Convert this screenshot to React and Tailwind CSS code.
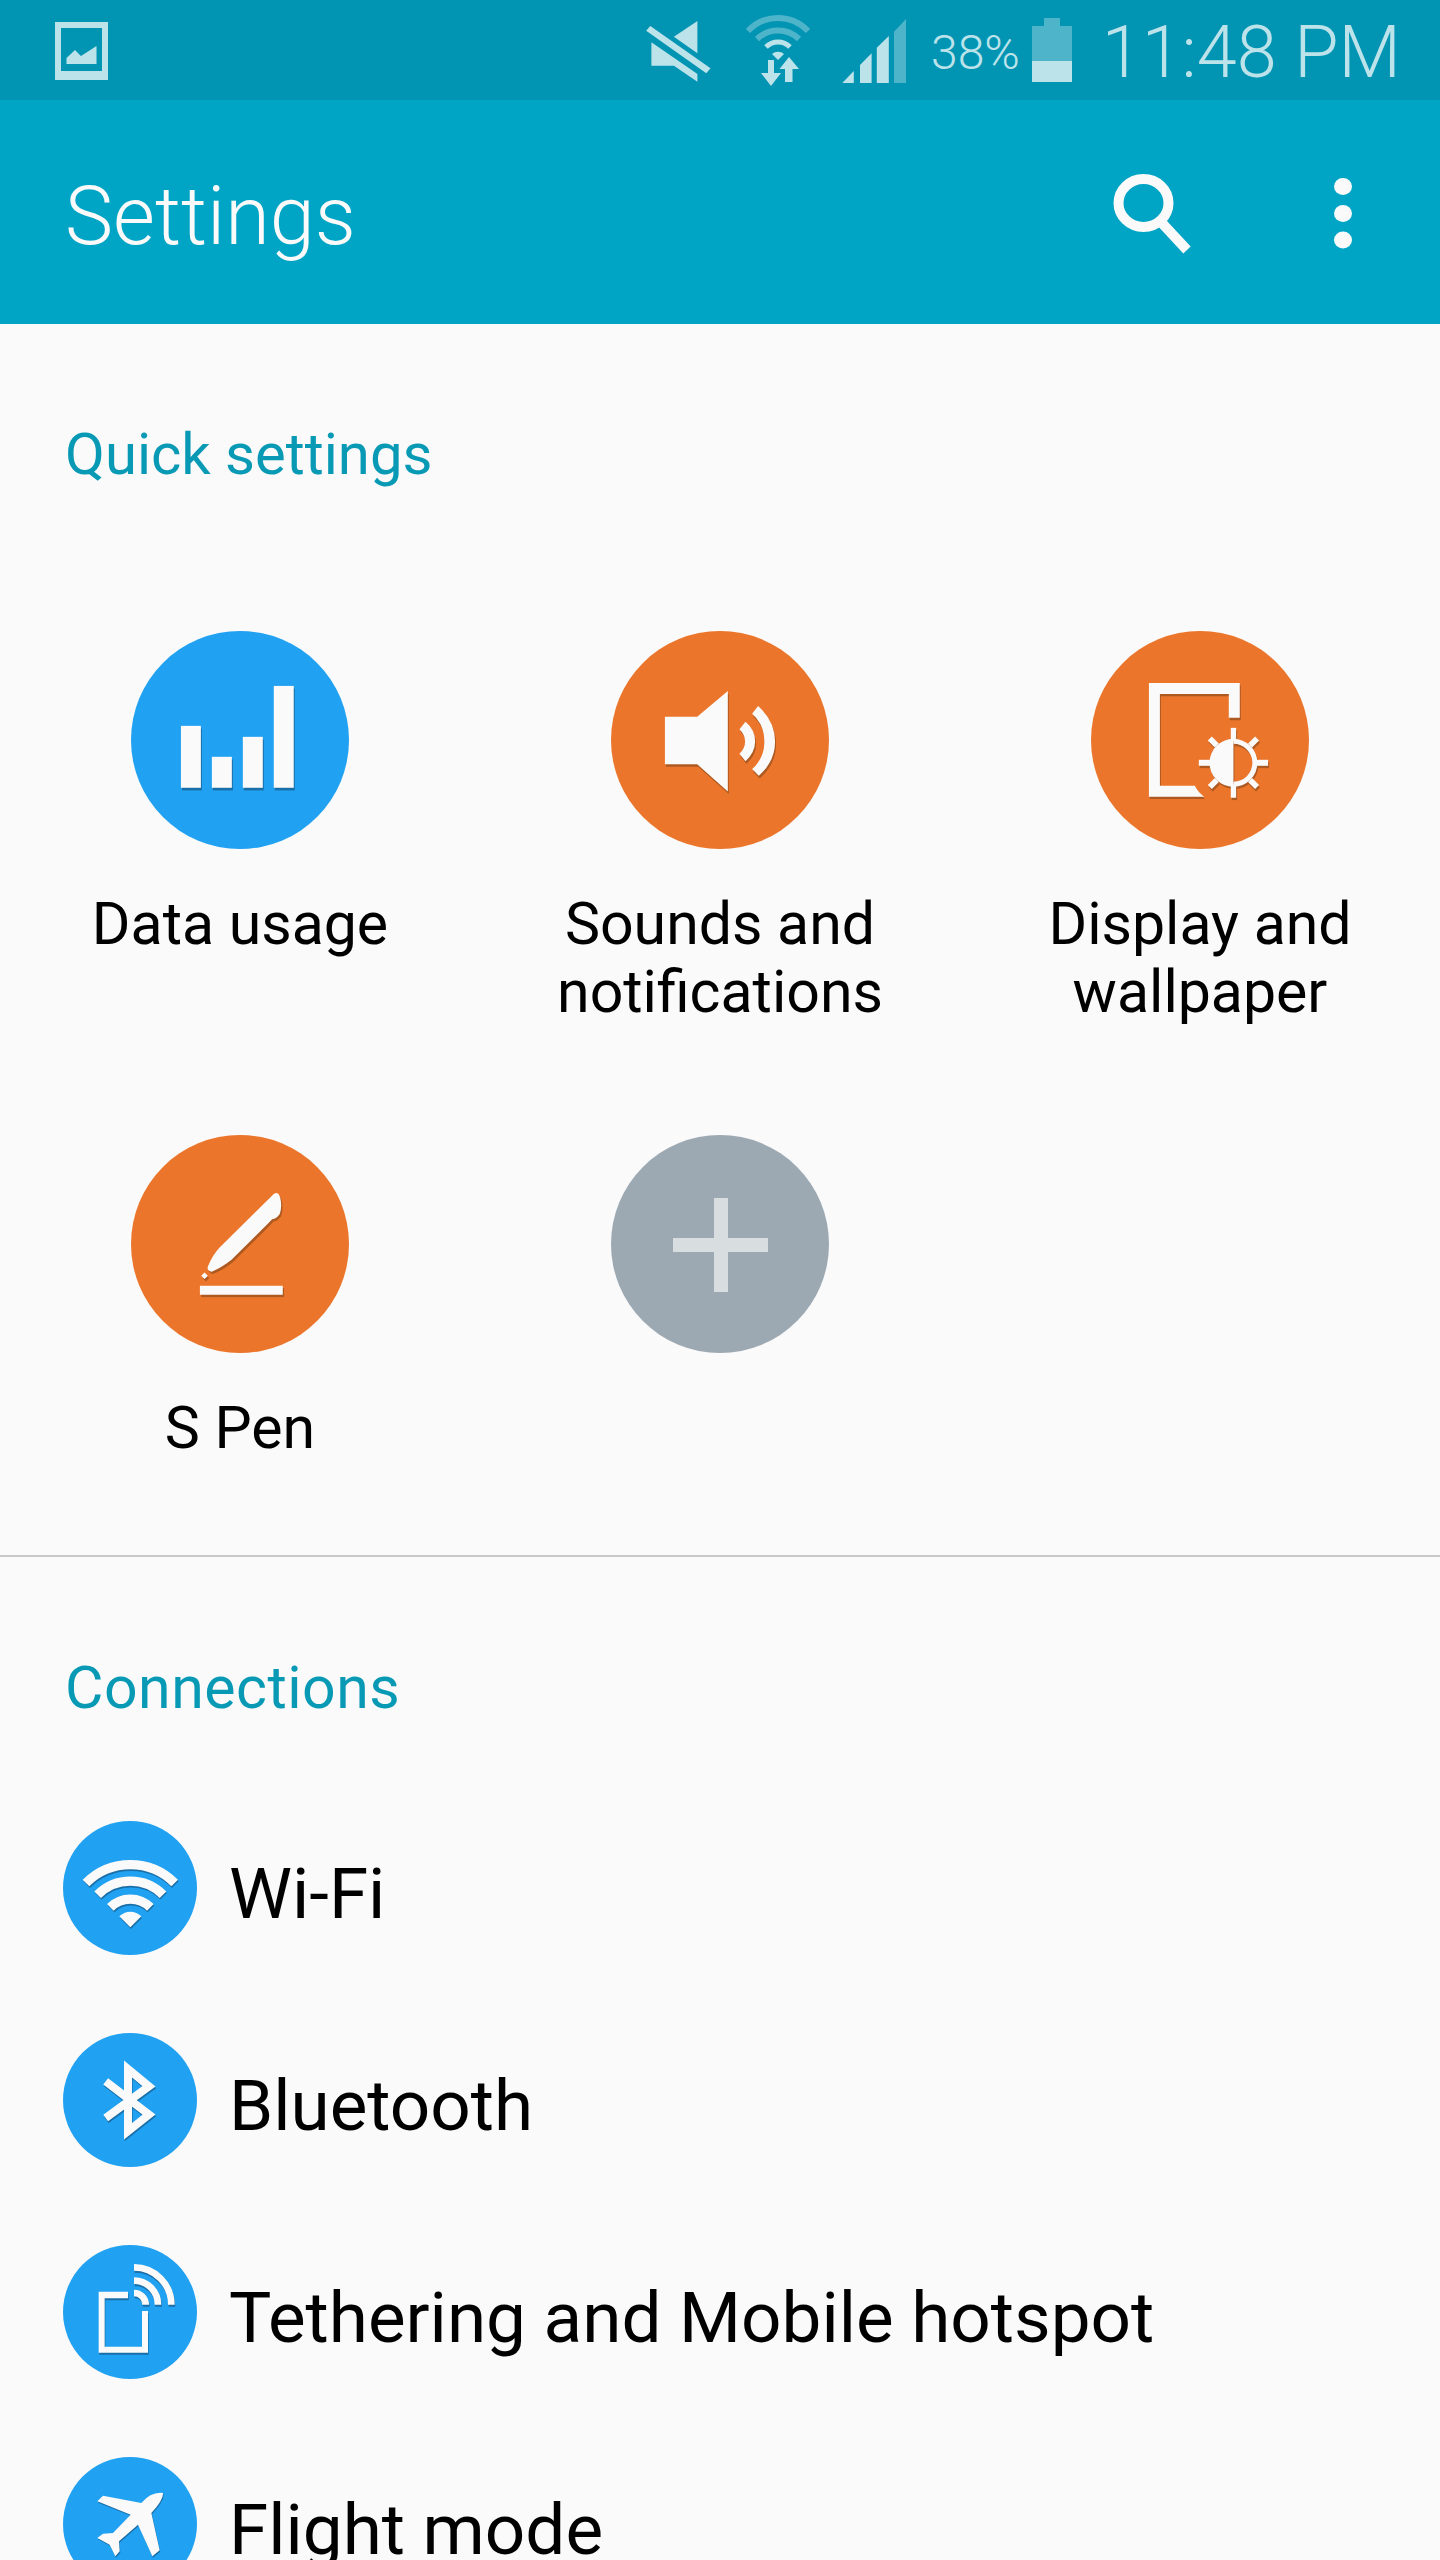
const WHITE = '#fafafa';
const BLUE_SHADOW = '#1a6fa8';
const ORANGE_SHADOW = '#ad5a22';

// draws the same shapes twice: a dark copy nudged down-right, then the white one
function Shadowed({ shadow, dx = 3, dy = 8, children }) {
  return (
    <>
      <g transform={`translate(${dx} ${dy})`} fill={shadow} stroke={shadow} strokeWidth="0" style={{ color: shadow }}>
        {children}
      </g>
      <g fill={WHITE} stroke={WHITE} strokeWidth="0" style={{ color: WHITE }}>
        {children}
      </g>
    </>
  );
}

function DataIcon() {
  return (
    <svg viewBox="63 63 655 655" className="w-full h-full">
      <Shadowed shadow={BLUE_SHADOW}>
        <rect x="213" y="348" width="60" height="186" />
        <rect x="306" y="441" width="60" height="93" />
        <rect x="399" y="381" width="60" height="153" />
        <rect x="492" y="228" width="60" height="306" />
      </Shadowed>
    </svg>
  );
}

function SoundIcon() {
  return (
    <svg viewBox="63 63 655 655" className="w-full h-full">
      <Shadowed shadow={ORANGE_SHADOW}>
        <path d="M225 321H322L414 243V545L322 463H225Z" />
        <path d="M505 288Q556 335 556 395Q556 455 507 498L487 478Q524 445 524 395Q524 345 487 312Z" />
        <path d="M467 336Q496 360 496 395Q496 428 467 454L449 432Q466 415 466 395Q466 375 449 358Z" />
      </Shadowed>
    </svg>
  );
}

function DisplayIcon() {
  return (
    <svg viewBox="63 63 655 655" className="w-full h-full">
      <Shadowed shadow={ORANGE_SHADOW} dy={7}>
        <path d="M237 219H510V324H477V252H270V528H375Q385 548 403 561H237Z" />
        <path d="M491 387A72 72 0 0 0 491 531Z" />
        <path d="M491 387A72 72 0 0 1 491 531V516A57 57 0 0 0 491 402Z" />
        <rect x="483" y="354" width="16" height="40" />
        <rect x="483" y="524" width="16" height="40" />
        <rect x="387" y="450" width="36" height="18" />
        <rect x="559" y="450" width="36" height="18" />
        <path d="M426 380L447 401L435 413L414 392Z" />
        <path d="M556 380L568 392L547 413L535 401Z" />
        <path d="M435 505L447 517L426 538L414 526Z" />
        <path d="M547 505L568 526L556 538L535 517Z" />
      </Shadowed>
    </svg>
  );
}

function PenIcon() {
  return (
    <svg viewBox="63 45 655 655" className="w-full h-full">
      <Shadowed shadow={ORANGE_SHADOW} dx={4} dy={7}>
        <path d="M492 222Q505 213 511 232Q518 258 510 282Q500 296 487 298L474 312L365 420Q335 444 305 456Q290 452 294 440Q308 405 330 382Z" />
        <path d="M284 458L294 468L284 478L274 468Z" />
        <rect x="270" y="498" width="249" height="27" />
      </Shadowed>
    </svg>
  );
}

function PlusIcon() {
  return (
    <svg viewBox="0 0 218 218" className="w-full h-full">
      <path d="M62 103H103V63H117V103H157V117H117V157H103V117H62Z" fill="#d8dde0" />
    </svg>
  );
}

function WifiIcon() {
  return (
    <svg viewBox="40 33 402 402" className="w-full h-full">
      <Shadowed shadow={BLUE_SHADOW} dx={2} dy={5}>
        <path d="M109 219A188 188 0 0 1 375 219" fill="none" stroke="currentColor" style={{ strokeWidth: 28 }} />
        <path d="M144 254A138 138 0 0 1 340 254" fill="none" stroke="currentColor" style={{ strokeWidth: 28 }} />
        <path d="M182 292A85 85 0 0 1 302 292" fill="none" stroke="currentColor" style={{ strokeWidth: 28 }} />
        <path d="M242 352L209 319A46 46 0 0 1 275 319Z" />
      </Shadowed>
    </svg>
  );
}

function BluetoothIcon() {
  return (
    <svg viewBox="40 670 402 402" className="w-full h-full">
      <Shadowed shadow={BLUE_SHADOW} dx={2} dy={5}>
        <path d="M168 815L298 915L235 965V778L298 830L168 925" fill="none" stroke="currentColor" style={{ strokeWidth: 24 }} />
      </Shadowed>
    </svg>
  );
}

function TetherIcon() {
  return (
    <svg viewBox="40 45 402 402" className="w-full h-full">
      <Shadowed shadow={BLUE_SHADOW} dx={2} dy={6}>
        <path d="M147 185H235V205H165V350H277V243H295V368H147Z" />
        <path d="M253 112A112 112 0 0 1 365 224" fill="none" stroke="currentColor" style={{ strokeWidth: 20 }} />
        <path d="M253 152A72 72 0 0 1 325 224" fill="none" stroke="currentColor" style={{ strokeWidth: 20 }} />
        <path d="M253 189A35 35 0 0 1 288 224" fill="none" stroke="currentColor" style={{ strokeWidth: 20 }} />
      </Shadowed>
    </svg>
  );
}

function PlaneIcon() {
  return (
    <svg viewBox="40 682 402 402" className="w-full h-full">
      <Shadowed shadow={BLUE_SHADOW} dx={2} dy={4}>
        <path d="M340 790Q342 810 305 850L330 962L308 980L265 885L208 935L210 965L197 980L180 945L143 925L160 912L190 910L243 855L143 815L160 798L275 820Q305 785 340 790Z" />
      </Shadowed>
    </svg>
  );
}

function QuickItem({ bg, icon, children }) {
  return (
    <div className="flex flex-col items-center">
      <div className={`w-[218px] h-[218px] rounded-full ${bg}`}>{icon}</div>
      <div className="mt-[41px] text-center text-[59px] leading-[68px] text-black">{children}</div>
    </div>
  );
}

function ConnectionRow({ icon, children }) {
  return (
    <div className="flex items-center h-[134px] mb-[78px]">
      <div className="w-[134px] h-[134px] rounded-full bg-[#21a1f1] shrink-0">{icon}</div>
      <div className="ml-[32px] pt-[10px] text-[71px] leading-none text-black whitespace-nowrap">{children}</div>
    </div>
  );
}

function StatusBar() {
  const light = '#bde3ea';
  const dim = '#4db4ca';
  return (
    <div className="h-[100px] bg-[#0295b3] flex items-center text-[#bde3ea]">
      <svg viewBox="55 0 53 100" className="w-[53px] h-[100px] ml-[55px]">
        <path d="M55 22H108V80H55ZM61 28V71H102V28Z" fill={light} fillRule="evenodd" />
        <path d="M66.5 64V58L75 50L81 56L96.5 46V64Z" fill={light} />
      </svg>
      <svg viewBox="646 0 65 100" className="w-[65px] h-[100px] ml-[538px]">
        <path d="M697.4 21L673.9 36.7L697.4 53.3Z" fill={light} />
        <path d="M650.3 26L710.5 68.3L706.3 73.3L646.2 30.7Z" fill={light} />
        <path d="M651.4 42.3V65.7H673.9L697.4 81.7V74Z" fill={light} />
      </svg>
      <svg viewBox="745 0 66 100" className="w-[66px] h-[100px] ml-[34px]">
        <path d="M748 31A41 41 0 0 1 808 31" fill="none" stroke={dim} strokeWidth="6" />
        <path d="M757 39A30 30 0 0 1 799 39" fill="none" stroke={dim} strokeWidth="6" />
        <path d="M766 47A17 17 0 0 1 790 47" fill="none" stroke={light} strokeWidth="5" />
        <path d="M778 60L772 54A9 9 0 0 1 784 54Z" fill={light} />
        <path d="M768 60H774V73H781L771 86L761 73H768Z" fill={light} />
        <path d="M785 82V69H779.5L789 57L799 69H792.5V82Z" fill={light} />
      </svg>
      <svg viewBox="842 0 64 100" className="w-[64px] h-[100px] ml-[31px]">
        <path d="M842.3 83L853.8 71V83Z" fill={light} />
        <path d="M860 83V65L871.6 53.3V83Z" fill={light} />
        <path d="M876.8 83V47.7L888.8 36V83Z" fill={light} />
        <path d="M894 83V31.7L906 19V83Z" fill={dim} />
      </svg>
      <span className="ml-[25px] pt-[6px] text-[48px] font-light leading-none">38%</span>
      <svg viewBox="1031 0 40 100" className="w-[40px] h-[100px] ml-[12px]">
        <path d="M1043 18H1059V26H1071V61H1031V26H1043Z" fill={dim} />
        <rect x="1031" y="61" width="40" height="21" fill={light} />
      </svg>
      <span className="ml-[30px] pt-[6px] text-[72px] font-light leading-none whitespace-nowrap">11:48 PM</span>
    </div>
  );
}

function AppBar() {
  return (
    <div className="h-[224px] bg-[#00a5c6] flex items-center pl-[65px]">
      <span className="pt-[8px] text-[81px] font-light leading-none text-[#fafafa]">Settings</span>
      <svg viewBox="1110 170 85 85" className="w-[85px] h-[85px] ml-auto">
        <ellipse cx="1143.5" cy="203" rx="25" ry="24" fill="none" stroke={WHITE} strokeWidth="10" />
        <path d="M1161 222L1187 250" stroke={WHITE} strokeWidth="10" />
      </svg>
      <svg viewBox="1330 170 26 80" className="w-[26px] h-[80px] ml-[135px] mr-[84px]">
        <ellipse cx="1343" cy="184.5" rx="9" ry="8.5" fill={WHITE} />
        <ellipse cx="1343" cy="211.5" rx="9" ry="8.5" fill={WHITE} />
        <ellipse cx="1343" cy="238" rx="9" ry="8.5" fill={WHITE} />
      </svg>
    </div>
  );
}

export default function App() {
  return (
    <div className="w-[1440px] h-[2560px] overflow-hidden bg-[#fafafa] font-['Roboto',sans-serif]">
      <StatusBar />
      <AppBar />

      <div className="pt-[96px] pl-[65px] text-[58px] leading-[68px] text-[#0899b5]">Quick settings</div>
      <div className="grid grid-cols-3 pt-[143px] h-[1067px] content-start">
        <div className="h-[504px]">
          <QuickItem bg="bg-[#21a1f1]" icon={<DataIcon />}>Data usage</QuickItem>
        </div>
        <QuickItem bg="bg-[#eb752b]" icon={<SoundIcon />}>Sounds and<br />notifications</QuickItem>
        <QuickItem bg="bg-[#eb752b]" icon={<DisplayIcon />}>Display and<br />wallpaper</QuickItem>
        <QuickItem bg="bg-[#eb752b]" icon={<PenIcon />}>S Pen</QuickItem>
        <QuickItem bg="bg-[#9ca9b3]" icon={<PlusIcon />} />
      </div>

      <div className="border-t-2 border-[#c8c8c8]" />

      <div className="pt-[97px] pl-[65px] text-[59px] tracking-[0.5px] leading-[68px] text-[#0899b5]">Connections</div>
      <div className="pt-[99px] pl-[63px]">
        <ConnectionRow icon={<WifiIcon />}>Wi-Fi</ConnectionRow>
        <ConnectionRow icon={<BluetoothIcon />}>Bluetooth</ConnectionRow>
        <ConnectionRow icon={<TetherIcon />}>Tethering and Mobile hotspot</ConnectionRow>
        <ConnectionRow icon={<PlaneIcon />}>Flight mode</ConnectionRow>
      </div>
    </div>
  );
}
